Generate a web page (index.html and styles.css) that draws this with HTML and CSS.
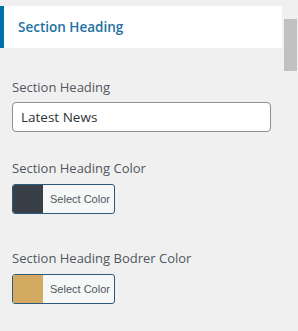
FILE: index.html
```html
<!DOCTYPE html>
<html lang="en">
<head>
    <meta charset="UTF-8">
    <title>Section Heading</title>
    <link rel="stylesheet" href="styles.css">
</head>
<body>
    <div class="panel">
        <div class="section-title">Section Heading</div>

        <div class="controls">
            <div class="control">
                <label class="control-label">Section Heading</label>
                <input class="text-input" type="text" value="Latest News">
            </div>

            <div class="control">
                <label class="control-label">Section Heading Color</label>
                <button class="color-button">
                    <span class="swatch swatch-dark"></span>
                    <span class="color-text">Select Color</span>
                </button>
            </div>

            <div class="control control-last">
                <label class="control-label">Section Heading Bodrer Color</label>
                <button class="color-button">
                    <span class="swatch swatch-gold"></span>
                    <span class="color-text">Select Color</span>
                </button>
            </div>
        </div>
    </div>

    <div class="scroll-thumb"></div>
</body>
</html>
```

FILE: styles.css
```css
body {
    margin: 0;
    background-color: #f0f0f1;
    font-family: 'Open Sans', 'Noto Sans', sans-serif;
    color: #50575e;
}

.panel {
    width: 282px;
    padding-top: 6px;
}

.section-title {
    height: 42px;
    display: flex;
    align-items: center;
    padding-left: 14px;
    background-color: #fff;
    border-left: 4px solid #0073aa;
    color: #2271a1;
    font-size: 13.5px;
    font-weight: 600;
}

.controls {
    padding: 30px 12px 0 12px;
}

.control {
    margin-bottom: 27px;
}

.control-label {
    display: block;
    font-size: 13px;
    font-weight: 500;
    line-height: 18px;
    margin-bottom: 6px;
    color: #50575e;
}

.text-input {
    box-sizing: border-box;
    width: 259px;
    height: 30px;
    margin: 0;
    padding: 0 8px;
    border: 1px solid #8c8f94;
    border-radius: 4px;
    background: #fff;
    font-family: inherit;
    font-size: 13.5px;
    color: #2c3338;
}

.color-button {
    display: flex;
    align-items: stretch;
    box-sizing: border-box;
    width: 103px;
    height: 30px;
    margin-top: 7px;
    padding: 0;
    border: 1px solid #2c5a7d;
    border-radius: 3px;
    background-color: #f6f7f7;
    overflow: hidden;
    cursor: pointer;
}

.swatch {
    width: 30px;
}

.swatch-dark {
    background-color: #393f46;
}

.swatch-gold {
    background-color: #d4a962;
}

.color-text {
    display: flex;
    align-items: center;
    padding-left: 7px;
    font-family: inherit;
    font-size: 11px;
    color: #50575e;
}

.control-last {
    margin-top: 35px;
}

.scroll-thumb {
    position: absolute;
    top: 19px;
    left: 284px;
    width: 13px;
    height: 52px;
    background-color: #c1c1c1;
}
```
